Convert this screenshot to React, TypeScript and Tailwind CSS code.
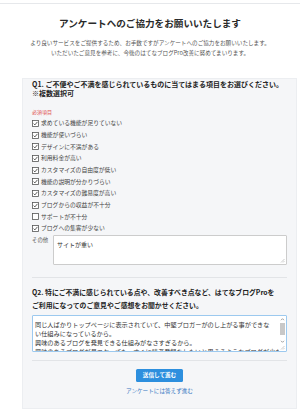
import React from 'react';

const items: { label: string; checked: boolean }[] = [
  { label: '求めている機能が足りていない', checked: true },
  { label: '機能が使いづらい', checked: true },
  { label: 'デザインに不満がある', checked: true },
  { label: '利用料金が高い', checked: true },
  { label: 'カスタマイズの自由度が低い', checked: true },
  { label: '機能の説明が分かりづらい', checked: true },
  { label: 'カスタマイズの難易度が高い', checked: true },
  { label: 'ブログからの収益が不十分', checked: true },
  { label: 'サポートが不十分', checked: false },
  { label: 'ブログへの集客が少ない', checked: true },
];

const CheckBox = ({ checked }: { checked: boolean }) => (
  <svg width="7" height="7" viewBox="0 0 7 7" className="shrink-0">
    <rect x="0.5" y="0.5" width="6" height="6" fill="#fff" stroke="#555" strokeWidth="0.8" />
    {checked && <path d="M1.6 3.6 L2.9 4.9 L5.4 1.9" fill="none" stroke="#333" strokeWidth="0.8" />}
  </svg>
);

const Grip = () => (
  <svg width="5" height="5" viewBox="0 0 5 5" className="absolute right-[1px] bottom-[1px]">
    <path d="M4.5 1 L1 4.5 M4.5 3 L3 4.5" stroke="#aaa" strokeWidth="0.6" />
  </svg>
);

export default function App() {
  return (
    <div className="w-[300px] h-[418px] bg-white text-[#333] font-['Noto_Sans_CJK_JP',sans-serif] overflow-hidden">
      <div className="h-[4px] border-b border-[#e6e8eb]" />

      <h1 className="mt-[13px] text-center text-[9.6px] leading-[12px] font-bold text-[#2a2a2a]">
        アンケートへのご協力をお願いいたします
      </h1>

      <div className="mt-[10px] text-center text-[5.6px] leading-[9.5px] text-[#555]">
        <div>より良いサービスをご提供するため、お手数ですがアンケートへのご協力をお願いいたします。</div>
        <div>いただいたご意見を参考に、今後のはてなブログPro改善に努めてまいります。</div>
      </div>

      <div className="mt-[20px] ml-[22px] w-[275px] h-[331px] bg-[#f5f6f8] border border-[#eceef1] px-[9px] pt-[1px]">
        <div className="text-[7px] leading-[9.4px] font-bold text-[#222] whitespace-nowrap">
          <div>Q1. ご不便やご不満を感じられているものに当てはまる項目をお選びください。</div>
          <div>※複数選択可</div>
        </div>

        <div className="mt-[9px] text-[5px] leading-[8px] text-[#e0504f]">必須項目</div>

        <div className="mt-[2px]">
          {items.map((it) => (
            <div key={it.label} className="flex items-center gap-[2px] h-[11.67px] text-[5.8px] text-[#444]">
              <CheckBox checked={it.checked} />
              <span>{it.label}</span>
            </div>
          ))}
        </div>

        <div className="mt-[1px] flex">
          <div className="w-[21px] pt-[1px] text-[5.4px] leading-[8px] text-[#555]">その他</div>
          <div className="relative flex-1 h-[30px] bg-white border border-[#ccc] rounded-[1px] px-[3px] pt-[4px] text-[6px] leading-[9px] text-[#333]">
            サイトが重い
            <Grip />
          </div>
        </div>

        <div className="mt-[12px] border-t border-[#e2e4e7]" />

        <div className="mt-[8px] text-[6.85px] leading-[12.3px] font-bold text-[#222] whitespace-nowrap">
          <div>Q2. 特にご不満に感じられている点や、改善すべき点など、はてなブログProを</div>
          <div>ご利用になってのご意見やご感想をお聞かせください。</div>
        </div>

        <div className="relative mt-[4px] h-[37px] bg-white border border-[#9cc9ef] rounded-[1px] overflow-hidden pl-[2px] pt-[4px] text-[6.2px] leading-[9px] text-[#333] whitespace-nowrap">
          <div>同じ人ばかりトップページに表示されていて、中堅ブロガーがのし上がる事ができな</div>
          <div>い仕組みになっているから。</div>
          <div>興味のあるブログを発見できる仕組みがなさすぎるから。</div>
          <div>興味のあるブログが見つかっても、すぐに読者登録をしたいと思えるようなブログが少ない。</div>
          <div className="absolute right-0 top-0 bottom-0 w-[7px] bg-white flex flex-col items-center">
            <svg width="5" height="5" viewBox="0 0 5 5" className="mt-[1px]">
              <path d="M1 3.2 L2.5 1.7 L4 3.2" fill="none" stroke="#777" strokeWidth="0.7" />
            </svg>
            <div className="mt-[1px] w-[5px] h-[12px] bg-[#c8c8c8]" />
            <div className="flex-1" />
            <svg width="5" height="5" viewBox="0 0 5 5" className="mb-[7px]">
              <path d="M1 1.8 L2.5 3.3 L4 1.8" fill="none" stroke="#777" strokeWidth="0.7" />
            </svg>
          </div>
          <Grip />
        </div>

        <div className="mt-[8px] border-t border-[#e2e4e7]" />

        <div className="mt-[8px] flex flex-col items-center">
          <button className="w-[47px] h-[13px] bg-[#2d8fde] rounded-[1.5px] text-white text-[5.6px] font-bold leading-[13px]">
            送信して進む
          </button>
          <a className="mt-[5px] text-[5.6px] leading-[8px] text-[#3a78c2]">アンケートには答えず進む</a>
        </div>
      </div>
    </div>
  );
}
